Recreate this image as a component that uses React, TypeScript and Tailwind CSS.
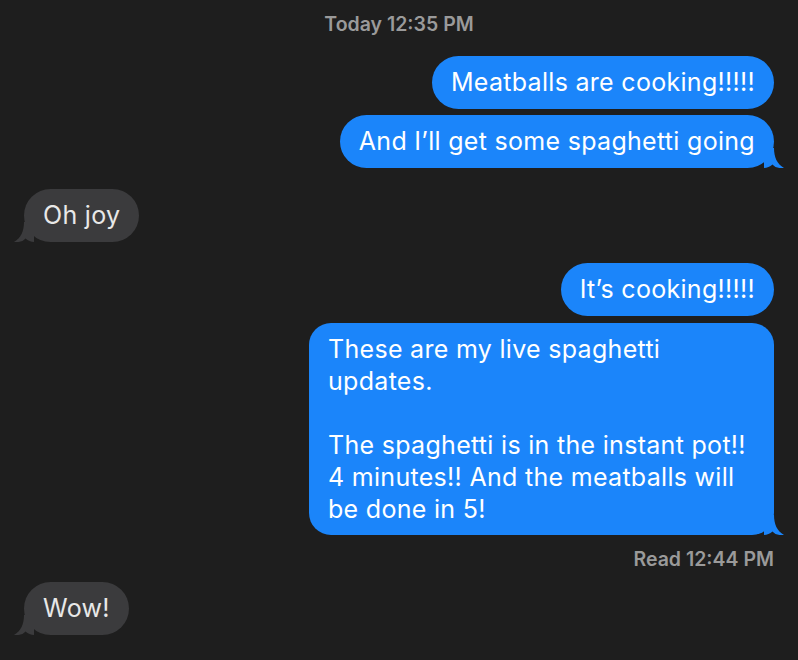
import React from 'react';

type Side = 'me' | 'them';

// iMessage-style tail, drawn at the bottom corner of the bubble
const Tail: React.FC<{ side: Side }> = ({ side }) => {
  const fill = side === 'me' ? '#1b85fa' : '#3b3b3d';
  return (
    <svg
      width="20"
      height="20"
      viewBox="0 0 20 20"
      className={side === 'me' ? 'absolute -right-[10px] bottom-0' : 'absolute -left-[10px] bottom-0 -scale-x-100'}
    >
      <path d="M0 0 H10 C10 9 13 16 20 20 C15 20.5 11 19.5 8.5 16.5 C6 18.7 3 19.8 0 20 Z" fill={fill} />
    </svg>
  );
};

const Bubble: React.FC<{ side: Side; children: React.ReactNode; tail?: boolean; big?: boolean }> = ({
  side,
  children,
  tail,
  big,
}) => {
  const me = side === 'me';
  return (
    <div className={me ? 'flex justify-end' : 'flex justify-start'}>
      <div
        className={
          'relative px-[19px] py-[10px] text-[25px] leading-[33px] tracking-[0.3px] ' +
          (big ? 'w-[465px] rounded-[22px] ' : 'rounded-[27px] ') +
          (me ? 'bg-[#1b85fa] text-white' : 'bg-[#3b3b3d] text-[#e8e8e8]')
        }
      >
        {children}
        {tail && <Tail side={side} />}
      </div>
    </div>
  );
};

export default function App() {
  return (
    <div
      className="w-[798px] h-[660px] overflow-hidden bg-[#1e1e1e] px-[24px] pt-[12px]"
      style={{ fontFamily: 'Inter, "Noto Sans", sans-serif' }}
    >
      <div className="text-center text-[19.5px] font-semibold leading-[24px] text-[#9a9a9a]">Today 12:35 PM</div>

      <div className="mt-[20px] flex flex-col">
        <Bubble side="me">Meatballs are cooking!!!!!</Bubble>
        <div className="mt-[6px]">
          <Bubble side="me" tail>
            And I’ll get some spaghetti going
          </Bubble>
        </div>

        <div className="mt-[21px]">
          <Bubble side="them" tail>
            Oh joy
          </Bubble>
        </div>

        <div className="mt-[21px]">
          <Bubble side="me">It’s cooking!!!!!</Bubble>
        </div>
        <div className="mt-[7px]">
          <Bubble side="me" tail big>
            <div className="leading-[32px]">
              These are my live spaghetti
              <br />
              updates.
              <br />
              <br />
              The spaghetti is in the instant pot!!
              <br />
              4 minutes!! And the meatballs will
              <br />
              be done in 5!
            </div>
          </Bubble>
        </div>

        <div className="mt-[12px] text-right text-[19.5px] font-semibold leading-[24px] text-[#9a9a9a]">Read 12:44 PM</div>

        <div className="mt-[11px]">
          <Bubble side="them" tail>
            Wow!
          </Bubble>
        </div>
      </div>
    </div>
  );
}
